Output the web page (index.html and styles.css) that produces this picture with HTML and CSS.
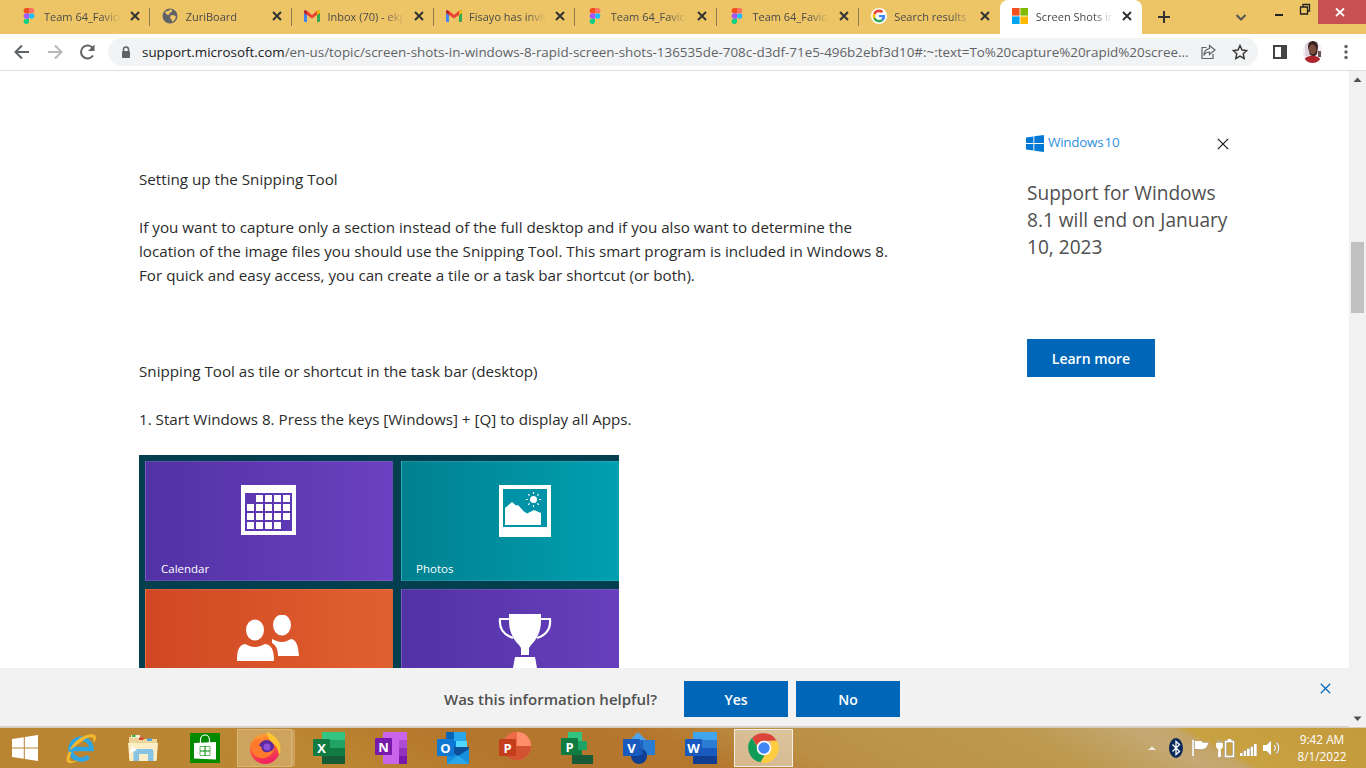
FILE: index.html
```html
<!DOCTYPE html>
<html lang="en">
<head>
<meta charset="utf-8">
<title>Screen Shots in Windows 8</title>
<link rel="stylesheet" href="styles.css">
</head>
<body>
<svg class="defs" width="0" height="0" aria-hidden="true">
  <symbol id="figma" viewBox="0 0 38 57">
    <path fill="#1abcfe" d="M19 28.5a9.5 9.5 0 1 1 19 0 9.5 9.5 0 1 1-19 0z"/>
    <path fill="#0acf83" d="M0 47.5A9.5 9.5 0 0 1 9.5 38H19v9.5a9.5 9.5 0 1 1-19 0z"/>
    <path fill="#ff7262" d="M19 0v19h9.5a9.5 9.5 0 1 0 0-19H19z"/>
    <path fill="#f24e1e" d="M0 9.5A9.5 9.5 0 0 0 9.5 19H19V0H9.5A9.5 9.5 0 0 0 0 9.5z"/>
    <path fill="#a259ff" d="M0 28.5A9.5 9.5 0 0 0 9.5 38H19V19H9.5A9.5 9.5 0 0 0 0 28.5z"/>
  </symbol>
  <symbol id="gmail" viewBox="0 0 16 12">
    <path fill="#4285f4" d="M0 1.5C0 .6.7 0 1.5 0L3 1.5V12H1a1 1 0 0 1-1-1z"/>
    <path fill="#34a853" d="M16 1.5c0-.9-.7-1.500-1.500-1.500L13 1.500V12h2a1 1 0 0 0 1-1z"/>
    <path fill="#ea4335" d="M0 1.500 3 .8 8 5l5-4.200 3 .7v1.300L8 8.500 0 2.800z"/>
    <path fill="#c5221f" d="M0 1.500v1.300l3 2.200V1.500L1.800.2C1 0 0 .5 0 1.500z"/>
    <path fill="#fbbc04" d="M13 1.500 14.200.2c.8-.2 1.800.3 1.800 1.300v1.300L13 5z"/>
  </symbol>
  <symbol id="x-small" viewBox="0 0 10 10">
    <path d="M1 1l8 8M9 1l-8 8" fill="none" stroke="currentColor" stroke-width="2"/>
  </symbol>
  <symbol id="word-x" viewBox="0 0 14 14">
    <path d="M1 1l12 12M13 1L1 13" fill="none" stroke="currentColor" stroke-width="1.500"/>
  </symbol>
</svg>

<header class="tabstrip">
  <div class="tab"><svg class="favicon favicon-figma"><use href="#figma"/></svg><span class="tab-title">Team 64_Favicon</span><svg class="tab-close"><use href="#x-small"/></svg></div>
  <div class="tab"><svg class="favicon" viewBox="0 0 16 16"><circle cx="8" cy="8" r="7.500" fill="#5f6368"/><path fill="#f0c668" d="M3 3.500 6.500 3 8 1.500l2.500.5-1 2-2 1v1.500l-2 .5L3.500 5zM9 7l3.500.5 1.500 1-1 3-2.500 2.500-1-2.500L8 10z"/></svg><span class="tab-title">ZuriBoard</span><svg class="tab-close"><use href="#x-small"/></svg></div>
  <div class="tab"><svg class="favicon"><use href="#gmail" y="2" height="12"/></svg><span class="tab-title">Inbox (70) - ekpo</span><svg class="tab-close"><use href="#x-small"/></svg></div>
  <div class="tab"><svg class="favicon"><use href="#gmail" y="2" height="12"/></svg><span class="tab-title">Fisayo has invited</span><svg class="tab-close"><use href="#x-small"/></svg></div>
  <div class="tab"><svg class="favicon favicon-figma"><use href="#figma"/></svg><span class="tab-title">Team 64_Favicon</span><svg class="tab-close"><use href="#x-small"/></svg></div>
  <div class="tab"><svg class="favicon favicon-figma"><use href="#figma"/></svg><span class="tab-title">Team 64_Favicon</span><svg class="tab-close"><use href="#x-small"/></svg></div>
  <div class="tab tab-last"><svg class="favicon" viewBox="-6 -6 60 60"><circle cx="24" cy="24" r="30" fill="#fff"/><path fill="#ea4335" d="M24 9.500c3.540 0 6.710 1.220 9.210 3.600l6.850-6.850C35.900 2.380 30.470 0 24 0 14.620 0 6.510 5.380 2.560 13.220l7.980 6.190C12.430 13.720 17.740 9.500 24 9.500z"/><path fill="#4285f4" d="M46.980 24.550c0-1.570-.15-3.090-.38-4.550H24v9.020h12.940c-.58 2.960-2.260 5.480-4.780 7.180l7.730 6c4.510-4.180 7.090-10.360 7.090-17.650z"/><path fill="#fbbc05" d="M10.530 28.590c-.48-1.450-.76-2.990-.76-4.590s.27-3.140.76-4.590l-7.980-6.190C.92 16.460 0 20.120 0 24c0 3.880.92 7.540 2.560 10.780l7.970-6.190z"/><path fill="#34a853" d="M24 48c6.480 0 11.930-2.130 15.890-5.810l-7.730-6c-2.150 1.450-4.920 2.300-8.160 2.300-6.260 0-11.570-4.220-13.470-9.910l-7.980 6.190C6.510 42.620 14.620 48 24 48z"/></svg><span class="tab-title">Search results</span><svg class="tab-close"><use href="#x-small"/></svg></div>
  <div class="tab tab-active"><svg class="favicon" viewBox="0 0 16 16"><rect width="7.600" height="7.600" fill="#f25022"/><rect x="8.400" width="7.600" height="7.600" fill="#7fba00"/><rect y="8.400" width="7.600" height="7.600" fill="#00a4ef"/><rect x="8.400" y="8.400" width="7.600" height="7.600" fill="#ffb900"/></svg><span class="tab-title">Screen Shots in Windows</span><svg class="tab-close"><use href="#x-small"/></svg></div>
  <svg class="new-tab" viewBox="0 0 28 28"><path d="M14 8v12M8 14h12" fill="none" stroke="#333" stroke-width="2"/></svg>
  <div class="strip-space"></div>
  <svg class="tab-search" viewBox="0 0 28 28"><path d="M9.500 12l4.500 4.500 4.500-4.500" fill="none" stroke="#555" stroke-width="2"/></svg>
  <div class="win-controls">
    <div class="win-btn"><svg viewBox="0 0 26 24" width="26" height="24"><path d="M9 15h8" stroke="#222" stroke-width="2"/></svg></div>
    <div class="win-btn"><svg viewBox="0 0 26 24" width="26" height="24"><path d="M8.500 7h7v7h-7zM11 7V4.500h6.500V11h-2" fill="none" stroke="#222" stroke-width="1.300"/></svg></div>
    <div class="win-close"><svg viewBox="0 0 48 24" width="48" height="24"><path d="M18 8.500l8 7.500M26 8.500l-8 7.500" fill="none" stroke="#fff" stroke-width="1.800"/></svg></div>
  </div>
</header>

<nav class="toolbar">
  <svg class="tool" viewBox="0 0 32 32"><path d="M23 16H10M16 9.500 9.500 16l6.500 6.500" fill="none" stroke="#5f6368" stroke-width="2"/></svg>
  <svg class="tool" viewBox="0 0 32 32"><path d="M9 16h13M16 9.500l6.500 6.500-6.500 6.500" fill="none" stroke="#b6b8ba" stroke-width="2"/></svg>
  <svg class="tool" viewBox="0 0 32 32"><path d="M21 19.500a6.500 6.500 0 1 1 .3-6.500" fill="none" stroke="#5f6368" stroke-width="2"/><path d="M22.500 8.500V15H16z" fill="#5f6368"/></svg>
  <div class="omnibox">
    <svg class="lock" viewBox="0 0 14 14"><path d="M4.500 6.500V4.500a2.500 2.500 0 0 1 5 0v2" fill="none" stroke="#5f6368" stroke-width="1.500"/><rect x="3" y="6" width="8" height="7" rx="1" fill="#5f6368"/></svg>
    <div class="url"><span class="url-host">support.microsoft.com</span>/en-us/topic/screen-shots-in-windows-8-rapid-screen-shots-136535de-708c-d3df-71e5-496b2ebf3d10#:~:text=To%20capture%20rapid%20scree...</div>
    <svg class="omni-icon" viewBox="0 0 16 16"><path d="M6.500 3.500H2v11h11V10" fill="none" stroke="#5f6368" stroke-width="1.200"/><path d="M9.500 1.500 15 6l-5.500 4.500V8C7 8 5 9 4 11.500c0-4 2-6.500 5.500-7z" fill="none" stroke="#5f6368" stroke-width="1.200"/></svg>
    <svg class="omni-icon omni-star" viewBox="0 0 16 16"><path d="M8 1.500l2 4.500 4.800.5-3.600 3.200 1 4.800L8 12.100l-4.200 2.400 1-4.800L1.200 6.500 6 6z" fill="none" stroke="#333" stroke-width="1.400"/></svg>
  </div>
  <svg class="tool tool-panel" viewBox="0 0 32 32"><path d="M10 10h12v12H10z" fill="none" stroke="#444" stroke-width="2"/><rect x="17" y="10" width="5" height="12" fill="#444"/></svg>
  <svg class="tool" viewBox="0 0 32 32"><defs><clipPath id="avatar-clip"><ellipse cx="15.500" cy="16" rx="10" ry="11"/></clipPath></defs><ellipse cx="15.500" cy="16" rx="10" ry="11" fill="#f4f0f5"/><g clip-path="url(#avatar-clip)"><path d="M8 5h5v15H8z" fill="#ddd2de"/><path d="M11 11c0-4 2-6 5-6s5 2 5 6l-1 7-3 3-4-2z" fill="#3a2422"/><ellipse cx="15.500" cy="13.500" rx="3.800" ry="5" fill="#7a4c3e"/><path d="M21 15h3v6h-3z" fill="#6a5856"/><path d="M6 28c0-6 4-8 9.500-8 5 0 9 2 9 8z" fill="#b0252c"/></g></svg>
  <svg class="tool" viewBox="0 0 32 32"><g fill="#5f6368"><circle cx="16" cy="10.500" r="1.700"/><circle cx="16" cy="16" r="1.700"/><circle cx="16" cy="21.500" r="1.700"/></g></svg>
</nav>

<div class="viewport">
  <main class="page">
    <article class="article">
      <p>Setting up the Snipping Tool</p>
      <p>If you want to capture only a section instead of the full desktop and if you also want to determine the<br>location of the image files you should use the Snipping Tool. This smart program is included in Windows 8.<br>For quick and easy access, you can create a tile or a task bar shortcut (or both).</p>
      <p class="section-start">Snipping Tool as tile or shortcut in the task bar (desktop)</p>
      <p>1. Start Windows 8. Press the keys [Windows] + [Q] to display all Apps.</p>
      <div class="start-screen">
        <div class="tile tile-purple">
          <svg class="tile-icon icon-cal" viewBox="0 0 55 50"><rect width="55" height="50" fill="#fff"/><rect x="4" y="8" width="47" height="38" fill="#5c38b2"/><g fill="#fff"><rect x="15" y="10" width="7" height="7"/><rect x="24" y="10" width="7" height="7"/><rect x="33" y="10" width="7" height="7"/><rect x="42" y="10" width="7" height="7"/><rect x="6" y="19" width="7" height="7"/><rect x="15" y="19" width="7" height="7"/><rect x="24" y="19" width="7" height="7"/><rect x="33" y="19" width="7" height="7"/><rect x="42" y="19" width="7" height="7"/><rect x="6" y="28" width="7" height="7"/><rect x="15" y="28" width="7" height="7"/><rect x="24" y="28" width="7" height="7"/><rect x="33" y="28" width="7" height="7"/><rect x="42" y="28" width="7" height="7"/><rect x="6" y="37" width="7" height="7"/><rect x="15" y="37" width="7" height="7"/><rect x="24" y="37" width="7" height="7"/><rect x="33" y="37" width="7" height="7"/></g></svg>
          <span class="tile-label">Calendar</span>
        </div>
        <div class="tile tile-teal">
          <svg class="tile-icon icon-photo" viewBox="0 0 52 52"><rect width="52" height="52" fill="#fff"/><rect x="4" y="4" width="44" height="38" fill="#0093a8"/><path d="M6 40V23l7-6 4 3.500 2-.5 6 6.500 3 2 7-3.500 7 3V40z" fill="#fff"/><circle cx="34.500" cy="14.500" r="3.500" fill="#fff"/><path d="M34.500 7v2M34.500 20v2M27 14.500h2M40 14.500h2M29.200 9.200l1.400 1.400M38.400 18.400l1.400 1.400M39.800 9.200l-1.400 1.400M30.600 18.400l-1.400 1.400" stroke="#fff" stroke-width="1.200"/></svg>
          <span class="tile-label">Photos</span>
        </div>
        <div class="tile tile-orange">
          <svg class="tile-icon icon-people" viewBox="0 0 62 46"><ellipse cx="45" cy="10" rx="9" ry="10.500" fill="#fff"/><path d="M35 24c3 1 6 3 10 3s6-2 9-3c6 1 7 7 8 17H41c0-6-2-11-6-13z" fill="#fff"/><ellipse cx="18" cy="15" rx="9" ry="10.500" fill="#fff"/><path d="M8 29c3 1 6 3 10 3s7-2 10-3c7 1 9 6 9 17H0c0-11 2-16 8-17z" fill="#fff"/><path d="M29 28c6 1 9 7 9.500 18" fill="none" stroke="#db5a2c" stroke-width="1.500"/></svg>
        </div>
        <div class="tile tile-purple">
          <svg class="tile-icon icon-trophy" viewBox="0 0 54 55"><path d="M11 1h32v7c0 10-4 18-10 24l-2 3H23l-2-3C15 26 11 18 11 8z" fill="#fff"/><path d="M11 6H2c-1 10 4 16 13 19M43 6h9c1 10-4 16-13 19" fill="none" stroke="#fff" stroke-width="2.200"/><rect x="23" y="35" width="8" height="7" fill="#fff"/><path d="M17 44h20l2 11H15z" fill="#fff"/></svg>
        </div>
      </div>
    </article>
    <aside class="promo">
      <div class="promo-head">
        <svg class="promo-logo" viewBox="0 0 18 17"><path fill="#0078d4" d="M0 2.500 7.400 1.400v6.700H0zM8.300 1.300 18 0v8.100H8.300zM0 8.900h7.400v6.700L0 14.500zM8.300 8.900H18V17L8.300 15.700z"/></svg>
        <span class="promo-brand">Windows 10</span>
        <svg class="promo-close"><use href="#word-x"/></svg>
      </div>
      <h2 class="promo-title">Support for Windows 8.1 will end on January 10, 2023</h2>
      <div class="learn-more">Learn more</div>
    </aside>
    <div class="helpful">
      <span class="helpful-text">Was this information helpful?</span>
      <div class="helpful-btn">Yes</div>
      <div class="helpful-btn">No</div>
      <svg class="helpful-close"><use href="#word-x"/></svg>
    </div>
  </main>
  <div class="scrollbar">
    <svg class="sb-arrow" viewBox="0 0 17 17"><path d="M4.500 11 8.500 6.500l4 4.500z" fill="#505050"/></svg>
    <div class="sb-thumb"></div>
    <svg class="sb-arrow sb-down" viewBox="0 0 17 17"><path d="M4.500 6.500 8.500 11l4-4.500z" fill="#505050"/></svg>
  </div>
</div>

<footer class="taskbar">
  <svg class="start" viewBox="0 0 26 26"><path fill="#fff" d="M0 4 11.800 2.300v10.100H0zM12.800 2.100 26 0v12.400H12.800zM0 13.600h11.800v10.100L0 22zM12.800 13.600H26V26l-13.200-2.100z"/></svg>
  <div class="task">
    <svg class="app" viewBox="0 0 32 32"><path d="M7.500 17h19A10.500 10.500 0 1 0 23.500 24.500" fill="none" stroke="#2ea6e6" stroke-width="4.500"/><path d="M4.500 18.500C8 10.500 16 4 24 2.500c4-.8 7-.2 7 3 0 2-1 4-2.500 6 .3-2.500.5-5-1.500-6-1.500-.8-4 0-7 1.500" fill="#f2b92f"/><path d="M4 19.500c-2.500 5-3.500 9-1.500 10.800 2 1.800 6.500.5 11.500-2.300-3.500 1-7.500 1.800-8.700.6-1.300-1.300-.5-5 1.500-8.300z" fill="#f2b92f"/></svg>
  </div>
  <div class="task">
    <svg class="app" viewBox="0 0 32 32"><path d="M2 5h11l2 2h15v20H2z" fill="#ecd596"/><path d="M4 3h9v3H4z" fill="#f6efd6"/><path d="M5 3h3.500v2H5z" fill="#3bb54a"/><path d="M12 5.500h4.500v2.500H12z" fill="#d8453a"/><path d="M20 6.500h5v2.500h-5z" fill="#4aa3df"/><path d="M1 11h30l-1.500 18h-27z" fill="#fbeec4"/><path d="M6.500 29V19.500c0-1.500 1-2.500 2.500-2.500h15c1.500 0 2.500 1 2.500 2.500V29h-5.500v-7H12v7z" fill="#86c3e4"/><path d="M2 21l8-2.500-4.500-5z" fill="#fff" opacity=".85"/></svg>
  </div>
  <div class="task">
    <svg class="app app-store" viewBox="0 0 30 30"><rect width="30" height="30" fill="#008a00"/><path d="M10.500 11V6.500a4.500 4.500 0 0 1 9 0V11" fill="none" stroke="#fff" stroke-width="1.200"/><path fill="#fff" d="M4 10l22-1v17.500L4 25.500z"/><path d="M10 13.500h10v9H10z" fill="#fff" stroke="#008a00" stroke-width=".6"/><path d="M15 13v10M10 18h10" stroke="#008a00" stroke-width="1"/></svg>
  </div>
  <div class="task task-open">
    <svg class="app" viewBox="0 0 32 32"><defs><linearGradient id="fx" x1="0" y1="0" x2=".3" y2="1"><stop offset="0" stop-color="#ffb52e"/><stop offset=".5" stop-color="#ff5f36"/><stop offset="1" stop-color="#f0245e"/></linearGradient></defs><circle cx="16" cy="17" r="15" fill="url(#fx)"/><path d="M18 0c7 3 13 8 13.500 16 .2 3-.5 5-1.500 7-1-6-3-10-7-12-2-3-5-6-5-11z" fill="#ffc42e"/><circle cx="17.500" cy="15.500" r="7.500" fill="#5b2a9e"/><circle cx="18" cy="15" r="3.500" fill="#8e4fd6"/><path d="M2 12c2-4 6-6 10-4-2 1-3 2-3.500 4-.5 1.500 2 2 4 3 0 4 3 6 7 5 3-.8 5-2.500 6-5-.5 7-7 12-14 11C5 25 1 18 2 12z" fill="#ff7a2a"/></svg>
  </div>
  <div class="task"><svg class="app" viewBox="0 0 32 32"><rect x="9" y="0" width="23" height="8" fill="#33c481"/><rect x="9" y="8" width="12" height="8" fill="#21a366"/><rect x="21" y="8" width="11" height="8" fill="#21a366"/><rect x="9" y="16" width="12" height="8" fill="#107c41"/><rect x="21" y="16" width="11" height="8" fill="#107c41"/><rect x="9" y="24" width="23" height="8" fill="#185c37"/><rect x="0" y="7" width="17" height="17" rx="1" fill="#107c41"/><text x="8.500" y="20.500" class="app-letter">X</text></svg></div>
  <div class="task"><svg class="app" viewBox="0 0 32 32"><rect x="8" y="0" width="24" height="32" rx="1" fill="#ca64ea"/><rect x="24" y="8" width="8" height="8" fill="#ae4bd5"/><rect x="24" y="16" width="8" height="8" fill="#9332bf"/><rect x="24" y="24" width="8" height="8" fill="#7719aa"/><rect x="0" y="6" width="17" height="17" rx="1" fill="#7719aa"/><text x="8.500" y="19.500" class="app-letter">N</text></svg></div>
  <div class="task"><svg class="app" viewBox="0 0 32 32"><rect x="9" y="0" width="20" height="18" fill="#0364b8"/><rect x="17" y="0" width="12" height="9" fill="#28a8ea"/><rect x="9" y="9" width="10" height="9" fill="#0078d4"/><rect x="19" y="9" width="11" height="9" fill="#50d9ff"/><path d="M10 15h22v17H10z" fill="#1490df"/><path d="M10 32l11-9 11 9z" fill="#28a8ea"/><path d="M10 17l11 7 11-7v-2H10z" fill="#0a2767" opacity=".6"/><rect x="0" y="7" width="17" height="17" rx="1" fill="#0f78d4"/><text x="8.500" y="20.500" class="app-letter">O</text></svg></div>
  <div class="task"><svg class="app" viewBox="0 0 32 32"><circle cx="18" cy="14" r="14" fill="#ed6c47"/><path d="M18 0a14 14 0 0 1 14 14H18z" fill="#ff8f6b"/><path d="M4 14a14 14 0 0 0 28 0z" fill="#d35230"/><rect x="0" y="7" width="17" height="17" rx="1" fill="#c43e1c"/><text x="8.500" y="20.500" class="app-letter">P</text></svg></div>
  <div class="task"><svg class="app" viewBox="0 0 32 32"><rect x="7" y="0" width="14" height="9" fill="#33c481"/><rect x="11" y="9" width="15" height="9" fill="#21a366"/><rect x="11" y="18" width="10" height="5" fill="#107c41"/><rect x="11" y="23" width="21" height="9" fill="#185c37"/><rect x="0" y="6" width="17" height="17" rx="1" fill="#107c41"/><text x="8.500" y="19.500" class="app-letter">P</text></svg></div>
  <div class="task"><svg class="app" viewBox="0 0 32 32"><path d="M15 0l8 8-8 8-8-8z" fill="#50a5ea"/><rect x="18" y="8" width="14" height="15" fill="#2b7cd3"/><circle cx="16" cy="24" r="8" fill="#0f3f94"/><path d="M10 8h10v15H10z" fill="#185abd" opacity=".8"/><rect x="0" y="7" width="17" height="17" rx="1" fill="#185abd"/><text x="8.500" y="20.500" class="app-letter">V</text></svg></div>
  <div class="task"><svg class="app" viewBox="0 0 32 32"><rect x="8" y="0" width="24" height="8" fill="#41a5ee"/><rect x="8" y="8" width="24" height="8" fill="#2b7cd3"/><rect x="8" y="16" width="24" height="8" fill="#185abd"/><rect x="8" y="24" width="24" height="8" fill="#103f91"/><rect x="0" y="7" width="17" height="17" rx="1" fill="#185abd"/><text x="8.500" y="20.500" class="app-letter">W</text></svg></div>
  <div class="task task-active"><svg class="app" viewBox="0 0 48 48"><path d="M24 2a22 22 0 0 1 19 11H24a11 11 0 0 0-10.500 7.500L6 9A22 22 0 0 1 24 2z" fill="#db4437"/><path d="M6 9l9.500 16.500A11 11 0 0 0 25 35l-6 10.400A22 22 0 0 1 6 9z" fill="#0f9d58"/><path d="M43 13a22 22 0 0 1-24 32.400L28.500 29A11 11 0 0 0 33 13z" fill="#ffcd40"/><circle cx="24" cy="24" r="11" fill="#fff"/><circle cx="24" cy="24" r="8.500" fill="#4285f4"/></svg></div>
  <div class="tray">
    <svg class="tray-icon tray-up" viewBox="0 0 24 24"><path d="M8 14l4-3.500 4 3.500z" fill="#f0ede6"/></svg>
    <svg class="tray-icon" viewBox="0 0 24 24"><ellipse cx="12" cy="12" rx="7" ry="10" fill="#0b2a5c"/><path d="M8.500 8.500l7 7L12 18.500V5.500l3.500 3-7 7" fill="none" stroke="#fff" stroke-width="1.300"/></svg>
    <svg class="tray-icon tray-shade" viewBox="0 0 24 24"><path d="M5 3.500v17" stroke="#fff" stroke-width="1.800"/><path d="M6.500 5h7l1.500 1.500h6l-3 5.500-4 1.500-7.500-.5z" fill="#fff"/></svg>
    <svg class="tray-icon tray-shade" viewBox="0 0 24 24"><path d="M6 3.500v3.500M9 3.500V7M4.500 7h6v4.500l-2 2V21h-2v-7.500l-2-2z" fill="#fff" stroke="#fff" stroke-width=".9"/><rect x="13.500" y="5.500" width="8" height="15" fill="none" stroke="#fff" stroke-width="2"/><rect x="15.500" y="3" width="4" height="2" fill="#fff"/></svg>
    <svg class="tray-icon tray-shade" viewBox="0 0 24 24"><g fill="#fff"><rect x="4" y="17" width="2.800" height="3"/><rect x="7.500" y="14.500" width="2.800" height="5.500"/><rect x="11" y="12.500" width="2.800" height="7.500"/><rect x="14.500" y="10.500" width="2.800" height="9.500"/><rect x="18" y="8" width="2.800" height="12"/></g></svg>
    <svg class="tray-icon tray-shade" viewBox="0 0 24 24"><path d="M3 9h3.500L11 4.500v15L6.500 15H3z" fill="#fff"/><path d="M14 9a4.500 4.500 0 0 1 0 6M16.500 6.500a8 8 0 0 1 0 11" fill="none" stroke="#fff" stroke-width="1.300"/></svg>
    <div class="clock"><span>9:42 AM</span><span>8/1/2022</span></div>
  </div>
</footer>
</body>
</html>
```

FILE: styles.css
```css
* { box-sizing: border-box; }
html, body { margin: 0; height: 100%; }
body {
  width: 1366px;
  height: 768px;
  overflow: hidden;
  display: flex;
  flex-direction: column;
  background: #fff;
  font-family: "Open Sans", "Noto Sans", sans-serif;
}
.defs { position: absolute; }

/* tab strip */
.tabstrip {
  height: 34px;
  flex: none;
  display: flex;
  align-items: stretch;
  padding-left: 8.5px;
  background: #edc566;
}
.tab {
  width: 141.7px;
  flex: none;
  display: flex;
  align-items: center;
  padding: 0 10px 2px 12px;
  position: relative;
  color: #4a4a4a;
}
.tab::after {
  content: "";
  position: absolute;
  right: 0;
  top: 8px;
  height: 18px;
  width: 1px;
  background: #8f7d52;
}
.tab-last::after, .tab-active::after { display: none; }
.tab-active {
  background: #fff;
  border-radius: 8px 8px 0 0;
  color: #45474a;
}
.favicon { width: 16px; height: 16px; flex: none; }
.tab-title {
  margin-left: 7.5px;
  flex: 1;
  min-width: 0;
  font-size: 11px;
  white-space: nowrap;
  overflow: hidden;
  -webkit-mask-image: linear-gradient(90deg, #000 74%, transparent 100%);
  mask-image: linear-gradient(90deg, #000 74%, transparent 100%);
}
.tab-close { width: 10px; height: 10px; flex: none; margin-left: 9.5px; color: #333; }
.new-tab { width: 28px; height: 28px; margin: 3px 0 0 8px; flex: none; }
.strip-space { flex: 1; }
.tab-search { width: 28px; height: 28px; margin: 3px 11px 0 0; flex: none; }
.win-controls { display: flex; height: 24px; flex: none; }
.win-btn { width: 26px; height: 24px; }
.win-btn svg, .win-close svg { display: block; }
.win-close { width: 48px; height: 24px; background: #c75050; }

/* toolbar */
.toolbar {
  height: 37px;
  flex: none;
  display: flex;
  align-items: center;
  gap: 1px;
  padding: 0 0 1px 6px;
  background: #fff;
  border-bottom: 1px solid #dedede;
}
.tool { width: 32px; height: 32px; flex: none; }
.tool-panel { margin-left: 5px; }
.omnibox {
  width: 1150px;
  height: 28px;
  flex: none;
  margin-left: 3px;
  display: flex;
  align-items: center;
  padding: 0 10px 0 11px;
  border-radius: 14px;
  background: #f1f3f4;
}
.lock { width: 14px; height: 14px; flex: none; }
.url {
  margin-left: 9px;
  width: 1050px;
  flex: none;
  font-size: 13.4px;
  color: #5f6368;
  white-space: nowrap;
  overflow: hidden;
}
.url-host { color: #202124; }
.omni-icon { width: 16px; height: 16px; flex: none; margin-left: 8px; }
.omni-star { margin-left: 16px; }

/* page */
.viewport {
  height: 656px;
  flex: none;
  display: flex;
}
.page {
  width: 1349px;
  flex: none;
  display: flex;
  position: relative;
  overflow: hidden;
}
.article {
  width: 888px;
  flex: none;
  margin-left: 139px;
  padding-top: 96px;
  font-size: 15.2px;
  line-height: 24px;
  color: #2b2b2b;
}
.article p { margin: 0 0 24px; white-space: nowrap; }
.article .section-start { margin-top: 72px; }
.start-screen {
  width: 480px;
  height: 300px;
  padding: 6px;
  display: grid;
  grid-template-columns: 248px 248px;
  grid-auto-rows: 120px;
  gap: 8px;
  background: #043f50;
  overflow: hidden;
}
.tile {
  display: flex;
  flex-direction: column;
  align-items: center;
  border: 1px solid rgba(255, 255, 255, .12);
  padding: 23px 15px 3px;
}
.tile-purple { background: linear-gradient(90deg, #5232a4, #6a41c0); }
.tile-teal { background: linear-gradient(90deg, #00808f, #00a4b6); padding-left: 14px; }
.tile-orange { background: linear-gradient(90deg, #d04823, #e1602f); }
.tile-icon { flex: none; display: block; }
.icon-cal { width: 55px; height: 50px; margin-right: 1px; }
.icon-photo { width: 52px; height: 52px; margin-left: 1px; }
.icon-people { width: 62px; height: 46px; margin: 2px 2px 0 0; }
.icon-trophy { width: 54px; height: 55px; }
.tile-label {
  align-self: flex-start;
  margin-top: auto;
  font-size: 11.5px;
  line-height: 16px;
  color: #fff;
}

/* promo */
.promo {
  width: 204px;
  flex: none;
  padding-top: 63px;
}
.promo-head {
  display: flex;
  align-items: center;
  height: 18px;
  position: relative;
}
.promo-logo { width: 18px; height: 17px; margin-left: -1px; flex: none; }
.promo-brand {
  margin: -2px 0 0 4px;
  font-size: 13.5px;
  letter-spacing: -.3px;
  word-spacing: -2px;
  color: #2f92e2;
}
.promo-close {
  position: absolute;
  left: 190px;
  top: 4px;
  width: 12px;
  height: 12px;
  color: #222;
}
.promo-title {
  margin: 28px 0 0;
  font-size: 19.1px;
  line-height: 27px;
  font-weight: 400;
  color: #505050;
}
.learn-more {
  width: 128px;
  height: 38px;
  margin-top: 78px;
  display: flex;
  align-items: center;
  justify-content: center;
  background: #0067b8;
  color: #fff;
  font-size: 14px;
  font-weight: 600;
}

/* feedback bar */
.helpful {
  position: absolute;
  left: 0;
  right: 0;
  bottom: 0;
  height: 59px;
  padding: 13px 5px 9px 0;
  display: flex;
  justify-content: center;
  align-items: stretch;
  background: #f2f2f2;
  border-bottom: 1px solid #d4d4d4;
}
.helpful-text {
  align-self: center;
  margin-right: 27px;
  font-size: 15px;
  font-weight: 600;
  color: #505050;
}
.helpful-btn {
  width: 104px;
  display: flex;
  align-items: center;
  justify-content: center;
  margin-right: 8px;
  background: #0067b8;
  color: #fff;
  font-size: 14px;
  font-weight: 600;
}
.helpful-btn:last-of-type { margin-right: 0; }
.helpful-close {
  position: absolute;
  left: 1320px;
  top: 15px;
  width: 11px;
  height: 11px;
  color: #0067b8;
}

/* scrollbar */
.scrollbar {
  width: 17px;
  flex: none;
  display: flex;
  flex-direction: column;
  align-items: center;
  background: #f1f1f1;
}
.sb-arrow { width: 17px; height: 17px; flex: none; }
.sb-thumb { width: 13px; height: 71px; margin-top: 154px; background: #c1c1c1; }
.sb-down { margin-top: auto; }

/* taskbar */
.taskbar {
  height: 41px;
  flex: none;
  display: flex;
  align-items: center;
  padding-left: 12px;
  border-top: 1px solid #d8cdb6;
  background: linear-gradient(28deg, #b98533 3%, #bc8632 24%, #b4762c 36%, #b5772d 50%, #bb8f45 58%, #bd9a50 76%, #c5a873 84%, #c4a568 86.5%, #c8a140 87.5%, #c49a3c 100%);
}
.start { width: 26px; height: 26px; flex: none; margin-right: 12px; }
.task {
  width: 62px;
  height: 38px;
  flex: none;
  display: flex;
  align-items: center;
  justify-content: center;
}
.app { width: 32px; height: 32px; display: block; }
.app-store { width: 30px; height: 30px; }
.app-letter {
  font-family: "Open Sans", sans-serif;
  font-size: 13px;
  font-weight: 700;
  fill: #fff;
  text-anchor: middle;
}
.task-open {
  width: 55px;
  margin: 0 6px 0 1px;
  border: 1px solid #d9b778;
  background: rgba(255, 240, 210, .28);
  box-shadow: 4px 0 0 -1px rgba(255, 240, 210, .28);
}
.task-active {
  width: 59px;
  margin-left: 2px;
  border: 1px solid #f3efe6;
  background: rgba(255, 255, 255, .45);
}
.tray {
  margin-left: auto;
  padding-right: 6px;
  display: flex;
  align-items: center;
  color: #fff;
}
.tray-icon { width: 24px; height: 24px; flex: none; }
.tray-shade { filter: drop-shadow(0 0 .6px #3a2a10); }
.clock {
  width: 76px;
  display: flex;
  flex-direction: column;
  align-items: center;
  font-size: 11.8px;
  line-height: 17px;
}
```
